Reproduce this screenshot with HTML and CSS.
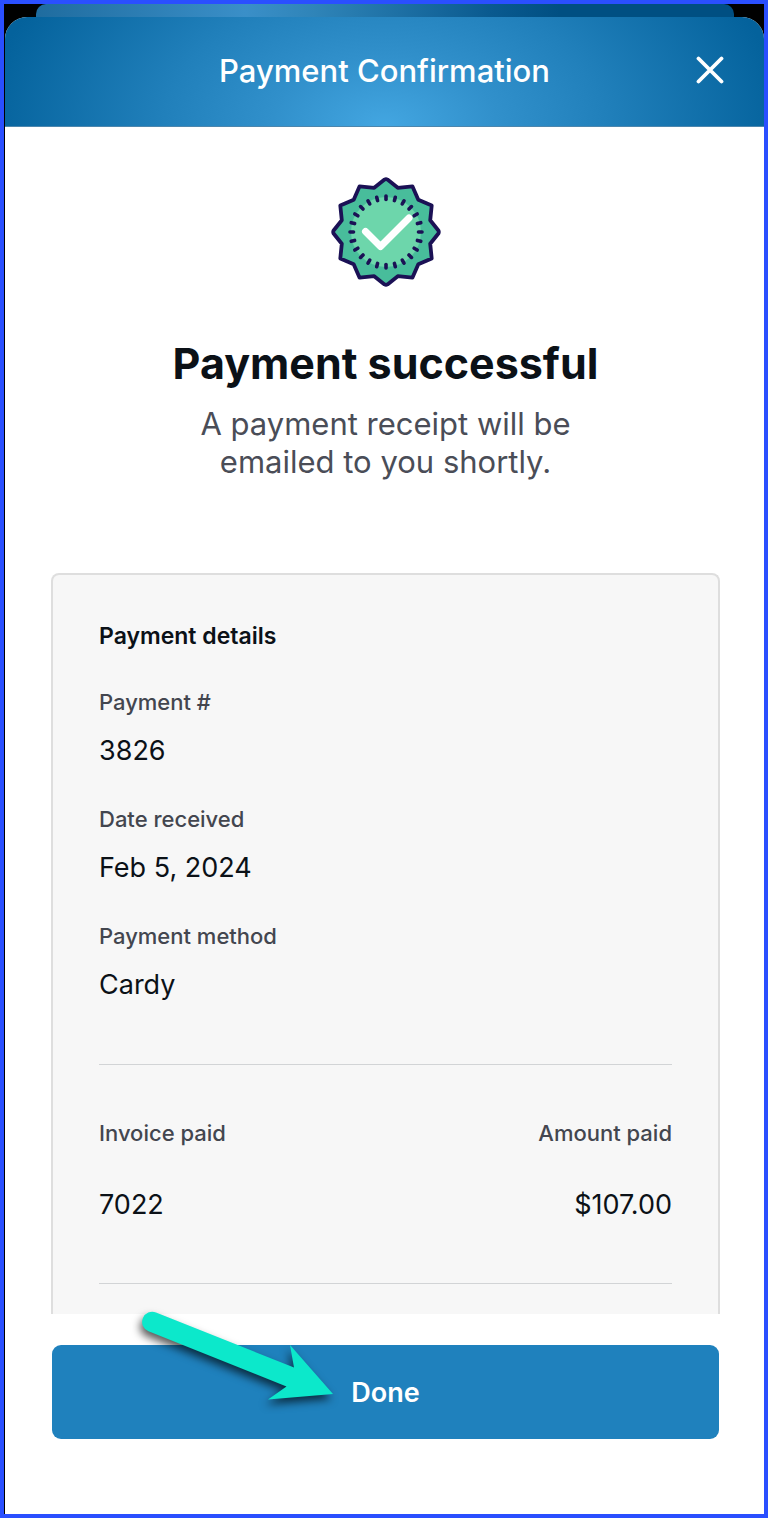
FILE: index.html
```
<!DOCTYPE html>
<html lang="en">
<head>
    <meta charset="UTF-8">
    <meta name="viewport" content="width=device-width, initial-scale=1.0">
    <title>Payment Confirmation</title>
    <link rel="stylesheet" href="styles.css">
</head>
<body>
    <div class="sheet-behind"></div>

    <div class="sheet">
        <header class="header">
            <h1 class="header-title">Payment Confirmation</h1>
            <button class="close-button" type="button" aria-label="Close">
                <svg viewBox="0 0 28 28" width="28" height="28">
                    <path d="M2.5 2.5L25.5 25.5M25.5 2.5L2.5 25.5" fill="none" stroke="#fff" stroke-width="3.8" stroke-linecap="round"/>
                </svg>
            </button>
        </header>

        <main class="content">
            <svg class="badge" viewBox="-55 -55 110 110" width="110" height="110" aria-hidden="true">
                <defs>
                    <path id="tick" d="M0 -36V-32.5"/>
                    <g id="ticks">
                        <use href="#tick"/>
                        <use href="#tick" transform="rotate(15)"/>
                        <use href="#tick" transform="rotate(30)"/>
                        <use href="#tick" transform="rotate(45)"/>
                        <use href="#tick" transform="rotate(60)"/>
                        <use href="#tick" transform="rotate(75)"/>
                    </g>
                </defs>
                <path d="M-1.5 -52.4Q0 -53.2 1.5 -52.4L11.8 -44.2L26.4 -45.7L32.3 -32.3L45.7 -26.4L44.2 -11.8L52.4 -1.5Q53.2 0 52.4 1.5L44.2 11.8L45.7 26.4L32.3 32.3L26.4 45.7L11.8 44.2L1.5 52.4Q0 53.2 -1.5 52.4L-11.8 44.2L-26.4 45.7L-32.3 32.3L-45.7 26.4L-44.2 11.8L-52.4 1.5Q-53.2 0 -52.4 -1.5L-44.2 -11.8L-45.7 -26.4L-32.3 -32.3L-26.4 -45.7L-11.8 -44.2Z" fill="#48bd9b" stroke="#1b1155" stroke-width="3.8" stroke-linejoin="round"/>
                <circle r="35" fill="#6dd6ab"/>
                <g stroke="#1b1155" stroke-width="3.6" stroke-linecap="round">
                    <use href="#ticks"/>
                    <use href="#ticks" transform="rotate(90)"/>
                    <use href="#ticks" transform="rotate(180)"/>
                    <use href="#ticks" transform="rotate(270)"/>
                </g>
                <path d="M-20.5 -0.5L-5.5 14.5L23 -14" fill="none" stroke="#fff" stroke-width="7" stroke-linecap="round" stroke-linejoin="round"/>
            </svg>

            <h2 class="title">Payment successful</h2>
            <p class="subtitle">A payment receipt will be<br>emailed to you shortly.</p>

            <section class="card">
                <h3 class="card-title">Payment details</h3>
                <dl class="details">
                    <div class="detail">
                        <dt>Payment #</dt>
                        <dd>3826</dd>
                    </div>
                    <div class="detail">
                        <dt>Date received</dt>
                        <dd>Feb 5, 2024</dd>
                    </div>
                    <div class="detail">
                        <dt>Payment method</dt>
                        <dd>Cardy</dd>
                    </div>
                </dl>

                <table class="invoices">
                    <thead>
                        <tr><th>Invoice paid</th><th>Amount paid</th></tr>
                    </thead>
                    <tbody>
                        <tr><td>7022</td><td>$107.00</td></tr>
                    </tbody>
                </table>
            </section>
        </main>

        <footer class="footer">
            <button class="done-button" type="button">Done</button>
            <svg class="arrow" viewBox="0 0 220 120" width="220" height="120" aria-hidden="true">
                <path d="M25 12.5L163 67.5L159 45L202 94L137 99.5L155.5 86.5L17.5 31.3A10 10 0 0 1 25 12.5Z" fill="#0ce8cb"/>
            </svg>
        </footer>
    </div>
</body>
</html>
```
FILE: styles.css
```
* {
    box-sizing: border-box;
}
body {
    font-family: Inter, "Liberation Sans", sans-serif;
    display: flex;
    flex-direction: column;
    min-height: 100vh;
    margin: 0;
    border: 4px solid #2a4fff;
    background-color: #000;
    color: #0b1117;
}
h1, h2, h3, p, dl, dd {
    margin: 0;
}
button {
    border: none;
    font-family: inherit;
    cursor: pointer;
}

/* edge of the screen stacked behind this one */
.sheet-behind {
    height: 13px;
    margin: 0 30px 0 32px;
    border-radius: 10px 10px 0 0;
    background: linear-gradient(90deg, #1f6c9f, #3a8fc8 30%, #2f84b8 40%, #0a5a8f 65%, #004f82 75%, #004f82);
}
.sheet {
    display: flex;
    flex-direction: column;
    flex: 1;
    margin-left: 1px;
    border-radius: 22px 22px 0 0;
    overflow: hidden;
    background-color: #fff;
}
.header {
    display: grid;
    grid-template-columns: 1fr auto 1fr;
    align-items: center;
    height: 110px;
    padding: 0 40px 3px;
    border-bottom: 1px solid #4c86ad;
    background: radial-gradient(400px 250px at 50% 100%, #43a6e1, #3190cb 28%, #2180bb 55%, #04629c);
}
.header-title {
    grid-column: 2;
    color: #fff;
    font-size: 31px;
    font-weight: 500;
}
.close-button {
    justify-self: end;
    display: flex;
    padding: 0;
    background: none;
}
.content {
    display: flex;
    flex-direction: column;
    flex: 1;
    padding: 50px 44px 0 46px;
}
.badge {
    align-self: center;
}
.title {
    margin-top: 50px;
    font-size: 43px;
    font-weight: 700;
    line-height: 52px;
    text-align: center;
}
.subtitle {
    margin: 16px 0 92px;
    color: #4a4d57;
    font-size: 31px;
    line-height: 38px;
    text-align: center;
}
.card {
    flex: 1;
    padding: 47px 46px 30px;
    border: 2px solid #dedede;
    border-bottom: none;
    border-radius: 8px 8px 0 0;
    background-color: #f7f7f7;
}
.card-title {
    margin-bottom: 38px;
    font-size: 23px;
    font-weight: 600;
    line-height: 28px;
}
.detail {
    margin-bottom: 36px;
}
.detail dt,
.invoices th {
    color: #43464f;
    font-size: 22px;
    font-weight: 500;
    line-height: 28px;
}
.detail dd,
.invoices td {
    font-size: 27px;
    line-height: 36px;
}
.detail dd {
    margin-top: 17px;
}
.invoices {
    width: 100%;
    margin-top: 61px;
    border-top: 1px solid #d2d4d6;
    border-bottom: 1px solid #d2d4d6;
    border-spacing: 0;
}
.invoices th {
    padding: 54px 0 0;
    text-align: left;
}
.invoices td {
    padding: 40px 0 60px;
}
.invoices th:last-child,
.invoices td:last-child {
    text-align: right;
}
.footer {
    position: relative;
    padding: 31px 45px 75px 47px;
}
.done-button {
    display: block;
    width: 100%;
    padding: 30px 29px 28px;
    border-radius: 9px;
    background-color: #1f81bd;
    color: #fff;
    font-size: 27px;
    font-weight: 600;
    line-height: 36px;
}
.arrow {
    position: absolute;
    top: -14px;
    left: 126px;
    overflow: visible;
    pointer-events: none;
    filter: drop-shadow(-2px 5px 4px rgba(0, 0, 0, 0.65));
}
```
